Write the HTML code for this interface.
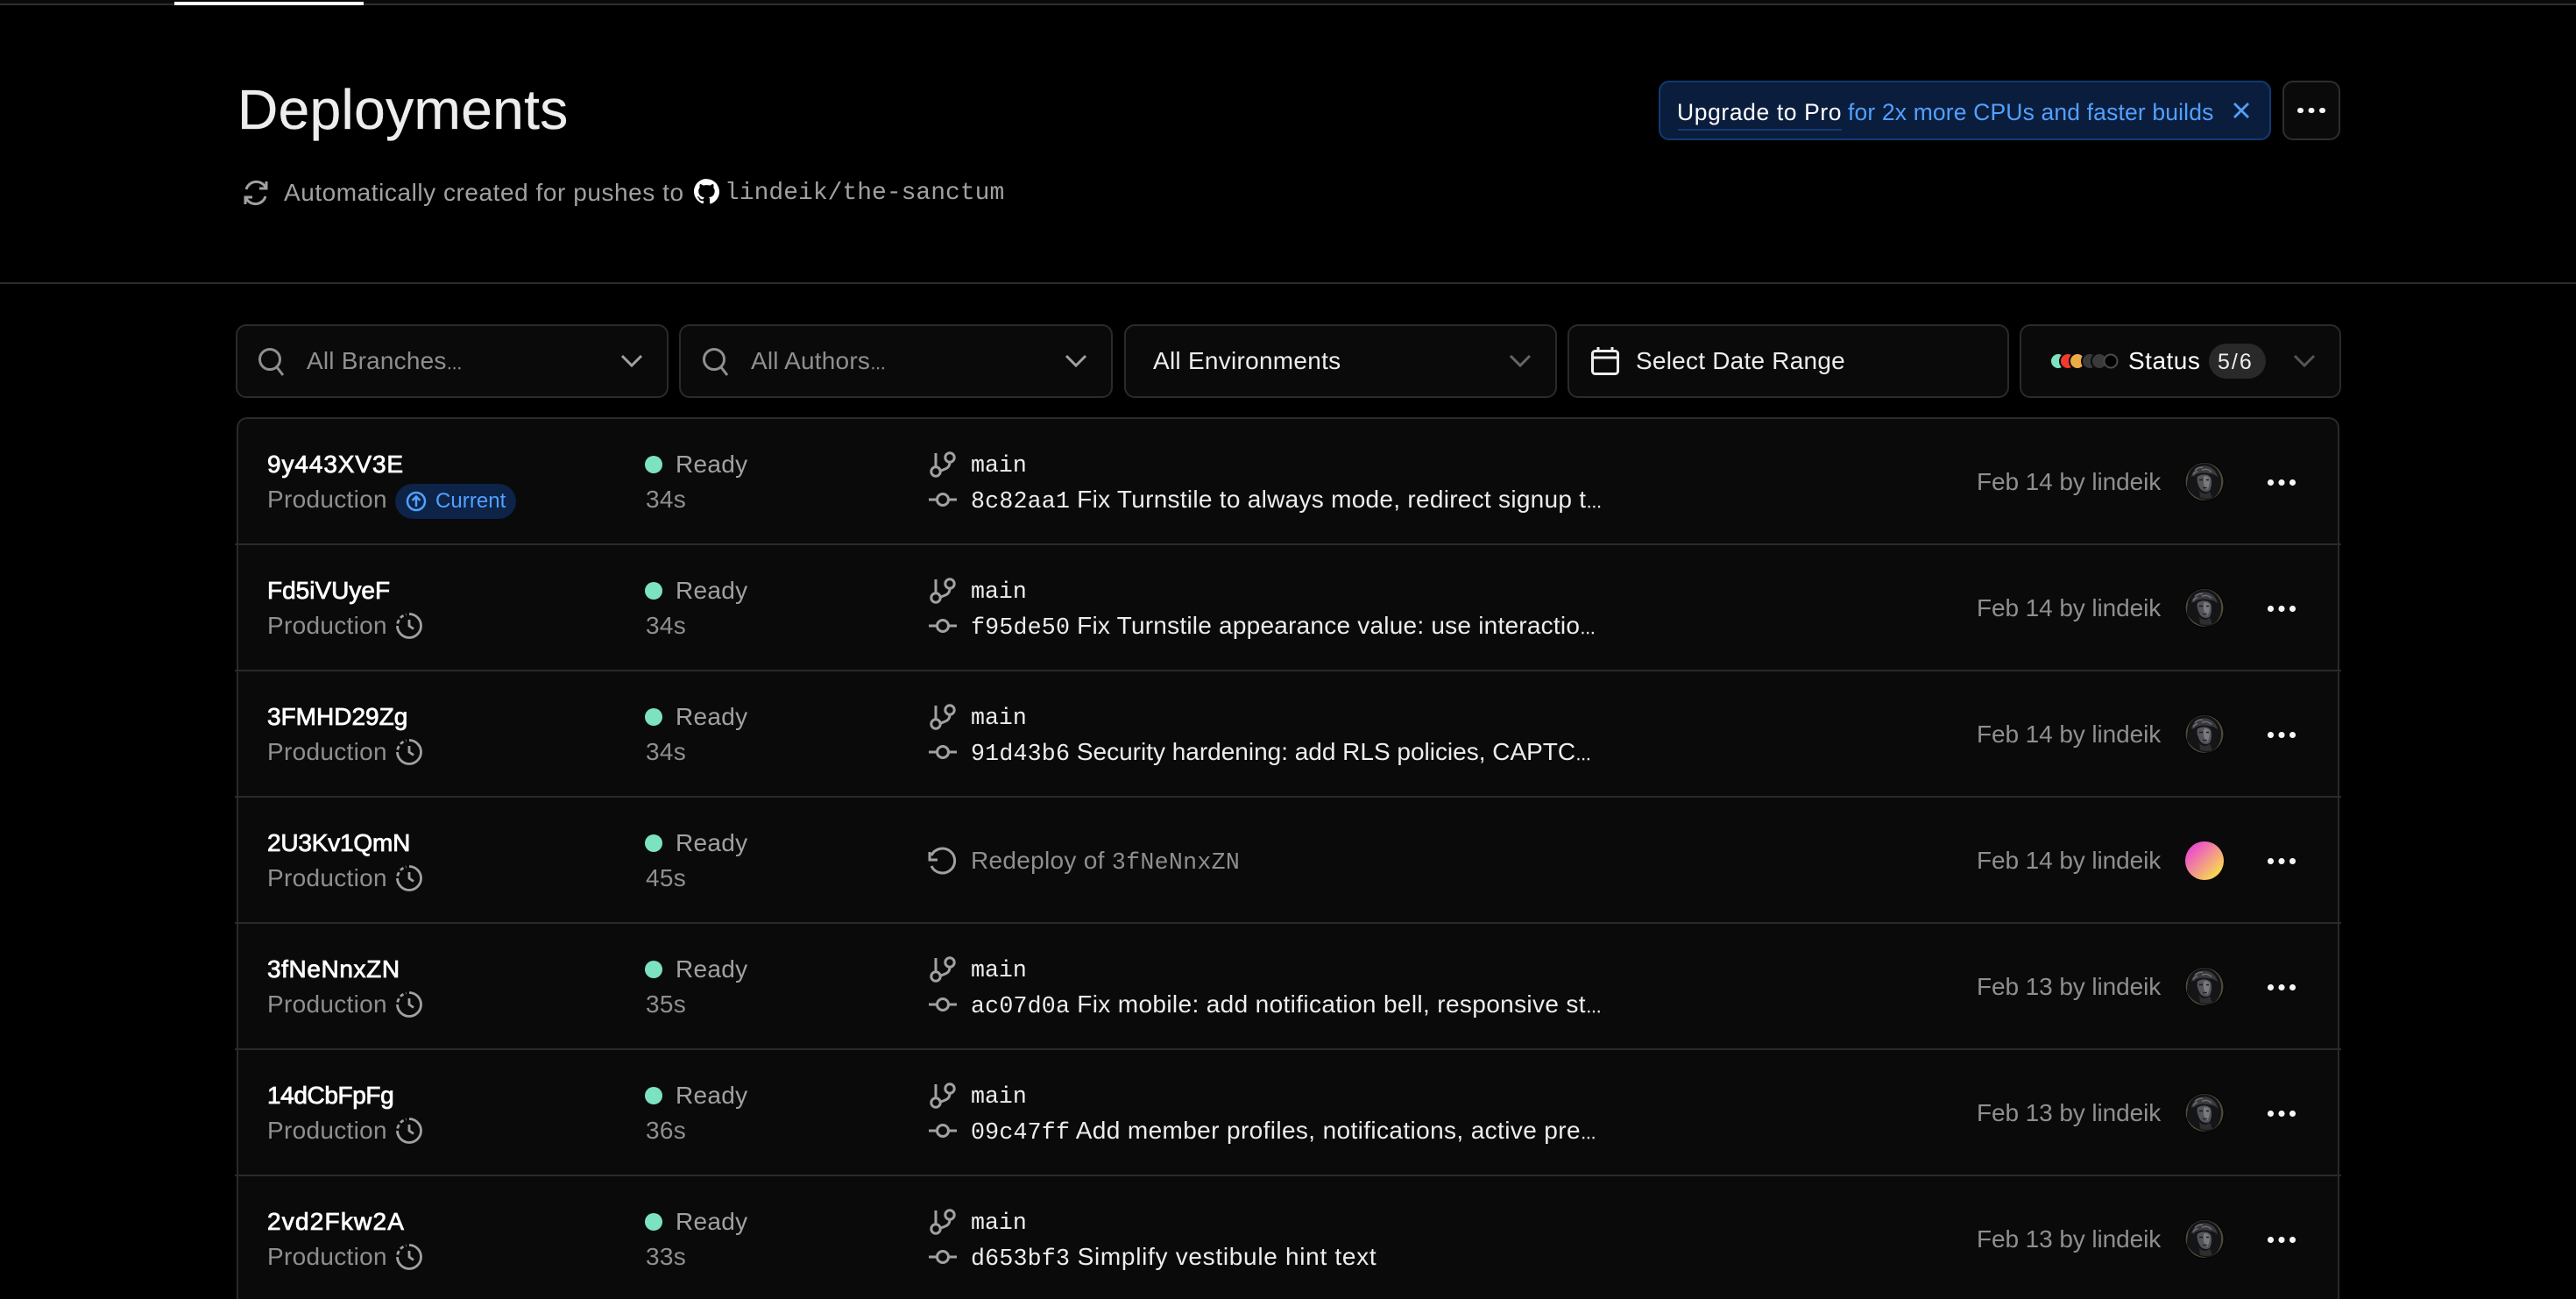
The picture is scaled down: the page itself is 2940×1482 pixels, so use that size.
<!DOCTYPE html>
<html><head><meta charset="utf-8"><title>Deployments</title>
<style>
*{box-sizing:border-box;margin:0;padding:0}
html,body{width:2940px;height:1482px;background:#000;overflow:hidden}
body{position:relative;font-family:"Liberation Sans",sans-serif;color:#ededed}
.a{position:absolute;white-space:nowrap}
.t{position:absolute;white-space:nowrap;font-size:28px;line-height:40px;letter-spacing:.3px}
.m{font-family:"Liberation Mono",monospace;font-size:26.6px}
.e{font-size:18px;letter-spacing:0;-webkit-text-stroke:.4px currentColor}
.box{position:absolute;background:#0a0a0a;border:2px solid #2a2a2a;border-radius:12px;top:370px;height:84px}
svg{position:absolute;overflow:visible;left:0;top:0;fill:none}
.list{position:absolute;left:270px;top:476px;width:2400px;height:1006px;background:#0a0a0a;border:2px solid #2a2a2a;border-bottom:0;border-radius:12px 12px 0 0}
.r{position:absolute;left:268px;width:2404px;height:146px;border-bottom:2px solid #2a2a2a}
.r.last{height:142px;border-bottom:0}
.r .t{color:#8f8f8f}
.r .id{left:37px;top:34px;color:#fff;-webkit-text-stroke:.8px #fff}
.r .env{left:37px;top:74px}
.r .ready{left:503px;top:34px;color:#a1a1a1}
.r .dur{left:469px;top:74px}
.r .dot{position:absolute;left:468px;top:44px;width:20px;height:20px;border-radius:50%;background:#7de2c1}
.r .br{left:840px;top:35px;color:#ededed;letter-spacing:0}
.r .cm{left:840px;top:74px;color:#ededed}
.r .cm .m{letter-spacing:.2px}
.r .date{left:1988px;top:54px;letter-spacing:-.09px}
.r .re{left:840px;top:54px;color:#8f8f8f}
.d3{position:absolute;left:2320px;top:71px;width:6.6px;height:6.6px;border-radius:50%;background:#f5f5f5;box-shadow:12.5px 0 #f5f5f5,25px 0 #f5f5f5}
</style></head>
<body>
<svg width="0" height="0" style="position:absolute"><defs>
<g id="clock"><path d="M0-13.500a13.500 13.500 0 1 1-13.500 13.500" stroke="#a1a1a1" stroke-width="2.800"/><path d="M-13.300-2.500a13.500 13.500 0 0 1 1.700-4.300M-10-9.300a13.500 13.500 0 0 1 3.500-2.500M-4-12.900l.6-.2" stroke="#a1a1a1" stroke-width="2.800"/><path d="M0-7V0l5 3.500" stroke="#a1a1a1" stroke-width="2.800"/></g>
<g id="branch" stroke="#a1a1a1" stroke-width="3"><path d="M-8-20V-4"/><circle cx="-8" cy="1" r="5.200"/><circle cx="8" cy="-15" r="5.200"/><path d="M8-10c0 8-6 8-11.500 10.500"/></g>
<g id="commit" stroke="#a1a1a1" stroke-width="3"><circle r="6.500"/><path d="M-16 0H-6.500M6.500 0H16"/></g>
<g id="ava"><circle r="22.500" fill="#000"/><circle r="21.500" fill="#4e4935"/>
<path d="M-20 7C-15 16-6 21 4 21C14 19 19 10 19 1C20-10 12-20 1-21C-11-21-19-13-19-4C-20 0-20 3-20 7Z" fill="#151517"/>
<path d="M-15-6C-13-14-6-19 2-18C9-17 14-11 15-5C12-8 9-9 6-9C0-11-8-10-11-7C-12-6-14-6-15-6Z" fill="#3a3a3e"/>
<path d="M-11-13c3-3 6-4 9-3M-3-13c4-2 8-1 11 2M-13-8c1-2 2-3 5-4" stroke="#6e6f73" stroke-width="1.500"/>
<path d="M-8-6C-3-9 4-9 7-5C9 0 8 6 6 10C2 13-4 11-6 6C-8 2-9-2-8-6Z" fill="#535458"/>
<path d="M-1-6C2-7 5-6 6-3C6 2 5 7 3 9C1 9 0 5-1 2Z" fill="#7a7b7f"/>
<path d="M-6-2h4M2-2h3" stroke="#1a1a1c" stroke-width="1.600"/><path d="M-2 7h5" stroke="#242426" stroke-width="1.400"/>
<path d="M6 11C2 15-3 14-6 10L-5 18C0 20 5 20 9 18Z" fill="#2e2e31"/></g>
<g id="search" stroke="#8f8f8f" stroke-width="3"><circle cx="-1" cy="-2" r="11.500"/><path d="M7 7L14 16"/></g>
</defs></svg>

<div class="a" style="left:0;top:0;width:2940px;height:4px;background:#0a0a0a"></div>
<div class="a" style="left:0;top:4px;width:2940px;height:2px;background:#2e2e2e"></div>
<div class="a" style="left:199px;top:2px;width:216px;height:4px;background:#fff"></div>

<div class="a" style="left:271px;top:88px;font-size:64px;line-height:74px;letter-spacing:.38px;color:#ededed;-webkit-text-stroke:.35px #ededed">Deployments</div>

<svg><g stroke="#a1a1a1" stroke-width="3"><path d="M281 216a12 12 0 0 1 21-4l2 3M303 224a12 12 0 0 1-21 4l-2-3"/><path d="M304 207v8h-8M280 233v-8h8"/></g></svg>
<div class="t" style="left:324px;top:200px;color:#a1a1a1;letter-spacing:.55px">Automatically created for pushes to</div>
<svg><path fill="#fff" d="M806.500 204c-8 0-14.500 6.500-14.500 14.500 0 6.400 4.200 11.800 9.900 13.700.7.100 1-.3 1-.7v-2.500c-4 .9-4.900-1.700-4.900-1.700-.7-1.700-1.600-2.100-1.600-2.100-1.300-.9.100-.9.100-.9 1.500.1 2.200 1.500 2.200 1.500 1.300 2.200 3.400 1.600 4.200 1.200.1-.9.500-1.600.9-1.900-3.200-.4-6.600-1.600-6.600-7.200 0-1.600.6-2.900 1.500-3.900-.1-.4-.6-1.900.2-3.900 0 0 1.200-.4 4 1.500 1.200-.3 2.400-.5 3.600-.5s2.400.2 3.600.5c2.800-1.900 4-1.500 4-1.500.8 2 .3 3.500.1 3.900.9 1 1.500 2.300 1.500 3.900 0 5.600-3.400 6.800-6.600 7.200.5.400 1 1.300 1 2.700v4c0 .4.300.8 1 .7 5.700-1.900 9.900-7.300 9.900-13.700 0-8-6.500-14.500-14.500-14.500z"/></svg>
<div class="t m" style="left:827px;top:201px;font-size:28px;color:#a1a1a1;letter-spacing:0">lindeik/the-sanctum</div>

<div class="a" style="left:1893px;top:92px;width:699px;height:68px;background:#0a1d3d;border:2px solid #123a72;border-radius:12px"></div>
<div class="t" style="left:1914px;top:108px;font-size:26.5px;color:#fff;letter-spacing:.6px">Upgrade to Pro</div>
<div class="a" style="left:1915px;top:147px;width:187px;height:2px;background:#153a70"></div>
<div class="t" style="left:2109px;top:108px;font-size:26.5px;color:#52a0ff;letter-spacing:.15px">for 2x more CPUs and faster builds</div>
<svg><path d="M2550 118l16 16M2566 118l-16 16" stroke="#52a0ff" stroke-width="2.800"/></svg>
<div class="a" style="left:2605px;top:92px;width:66px;height:68px;background:#0a0a0a;border:2px solid #2e2e2e;border-radius:12px"></div>
<div class="a" style="left:2622px;top:122.500px;width:6.600px;height:6.600px;border-radius:50%;background:#f5f5f5;box-shadow:12.500px 0 #f5f5f5,25px 0 #f5f5f5"></div>

<div class="a" style="left:0;top:322px;width:2940px;height:2px;background:#2a2a2a"></div>

<div class="box" style="left:269px;width:494px"></div>
<div class="box" style="left:775px;width:495px"></div>
<div class="box" style="left:1283px;width:494px"></div>
<div class="box" style="left:1789px;width:504px"></div>
<div class="box" style="left:2305px;width:367px"></div>

<svg><use href="#search" x="309" y="412"/><use href="#search" x="816" y="412"/>
<path d="M710 406l11 11 11-11" stroke="#a1a1a1" stroke-width="3"/>
<path d="M1217 406l11 11 11-11" stroke="#a1a1a1" stroke-width="3"/>
<path d="M1724 406l11 11 11-11" stroke="#666" stroke-width="3"/>
<path d="M2619 406l11 11 11-11" stroke="#555" stroke-width="3"/>
<g stroke="#ededed" stroke-width="3"><rect x="1817.500" y="400.500" width="29" height="26" rx="3"/><path d="M1817 408h30M1824 396v5M1840 396v5"/></g>
<g stroke="#0a0a0a" stroke-width="2"><circle cx="2349" cy="412" r="9" fill="#7de2c1"/><circle cx="2360" cy="412" r="9" fill="#f13a2b"/><circle cx="2371" cy="412" r="9" fill="#eeaa45"/><circle cx="2385" cy="412" r="9" fill="#3a3a3a"/><circle cx="2396" cy="412" r="9" fill="#3a3a3a"/></g>
<circle cx="2409" cy="412" r="7.500" fill="#000" stroke="#4a4a4a" stroke-width="2"/></svg>

<div class="t" style="left:350px;top:392px;color:#8f8f8f;letter-spacing:.2px">All Branches<span class="e">…</span></div>
<div class="t" style="left:857px;top:392px;color:#8f8f8f;letter-spacing:.2px">All Authors<span class="e">…</span></div>
<div class="t" style="left:1316px;top:392px;letter-spacing:.27px">All Environments</div>
<div class="t" style="left:1867px;top:392px;letter-spacing:.23px">Select Date Range</div>
<div class="t" style="left:2429px;top:392px;color:#fff;letter-spacing:.5px">Status</div>
<div class="a" style="left:2521px;top:392px;width:65px;height:40px;border-radius:20px;background:#292929"></div>
<div class="t" style="left:2531px;top:393px;font-size:25px;letter-spacing:2px">5/6</div>

<div class="list"></div>

<div class="r" style="top:476px"><div class="t id" style="letter-spacing:.9px">9y443XV3E</div><div class="t env">Production</div>
<div class="a" style="left:183px;top:76px;width:138px;height:40px;border-radius:20px;background:#0d2348"></div>
<svg><circle cx="207" cy="96" r="10" stroke="#52a0ff" stroke-width="2.500"/><path d="M207 102V91M202.500 95l4.500-4.500 4.500 4.500" stroke="#52a0ff" stroke-width="2.500"/></svg>
<div class="t" style="left:229px;top:76px;font-size:24px;color:#52a0ff;letter-spacing:.05px">Current</div>
<div class="dot"></div><div class="t ready">Ready</div><div class="t dur">34s</div>
<svg><use href="#branch" x="808" y="61"/><use href="#commit" x="808" y="94"/><use href="#ava" x="2248" y="73.500"/></svg>
<div class="t m br">main</div><div class="t cm" style="letter-spacing:.28px"><span class="m">8c82aa1</span> Fix Turnstile to always mode, redirect signup t<span class="e">…</span></div>
<div class="t date">Feb 14 by lindeik</div><div class="d3"></div></div>

<div class="r" style="top:620px"><div class="t id" style="letter-spacing:0">Fd5iVUyeF</div><div class="t env">Production</div>
<div class="dot"></div><div class="t ready">Ready</div><div class="t dur">34s</div>
<svg><use href="#clock" x="199" y="94"/><use href="#branch" x="808" y="61"/><use href="#commit" x="808" y="94"/><use href="#ava" x="2248" y="73.500"/></svg>
<div class="t m br">main</div><div class="t cm" style="letter-spacing:.23px"><span class="m">f95de50</span> Fix Turnstile appearance value: use interactio<span class="e">…</span></div>
<div class="t date">Feb 14 by lindeik</div><div class="d3"></div></div>

<div class="r" style="top:764px"><div class="t id" style="letter-spacing:0">3FMHD29Zg</div><div class="t env">Production</div>
<div class="dot"></div><div class="t ready">Ready</div><div class="t dur">34s</div>
<svg><use href="#clock" x="199" y="94"/><use href="#branch" x="808" y="61"/><use href="#commit" x="808" y="94"/><use href="#ava" x="2248" y="73.500"/></svg>
<div class="t m br">main</div><div class="t cm" style="letter-spacing:-.01px"><span class="m">91d43b6</span> Security hardening: add RLS policies, CAPTC<span class="e">…</span></div>
<div class="t date">Feb 14 by lindeik</div><div class="d3"></div></div>

<div class="r" style="top:908px"><div class="t id" style="letter-spacing:-.2px">2U3Kv1QmN</div><div class="t env">Production</div>
<div class="dot"></div><div class="t ready">Ready</div><div class="t dur">45s</div>
<svg><use href="#clock" x="199" y="94"/><g stroke="#a1a1a1" stroke-width="3" transform="translate(-2 0)"><path d="M797 68a14 14 0 1 1 0 12"/><path d="M795 64v9h9"/></g></svg>
<div class="t re">Redeploy of <span class="m">3fNeNnxZN</span></div>
<div class="t date">Feb 14 by lindeik</div>
<div class="a" style="left:2226px;top:52px;width:44px;height:44px;border-radius:50%;background:linear-gradient(135deg,#ea45d4 12%,#f9e04c 88%)"></div><div class="d3"></div></div>

<div class="r" style="top:1052px"><div class="t id" style="letter-spacing:.6px">3fNeNnxZN</div><div class="t env">Production</div>
<div class="dot"></div><div class="t ready">Ready</div><div class="t dur">35s</div>
<svg><use href="#clock" x="199" y="94"/><use href="#branch" x="808" y="61"/><use href="#commit" x="808" y="94"/><use href="#ava" x="2248" y="73.500"/></svg>
<div class="t m br">main</div><div class="t cm" style="letter-spacing:.36px"><span class="m">ac07d0a</span> Fix mobile: add notification bell, responsive st<span class="e">…</span></div>
<div class="t date">Feb 13 by lindeik</div><div class="d3"></div></div>

<div class="r" style="top:1196px"><div class="t id" style="letter-spacing:-.4px">14dCbFpFg</div><div class="t env">Production</div>
<div class="dot"></div><div class="t ready">Ready</div><div class="t dur">36s</div>
<svg><use href="#clock" x="199" y="94"/><use href="#branch" x="808" y="61"/><use href="#commit" x="808" y="94"/><use href="#ava" x="2248" y="73.500"/></svg>
<div class="t m br">main</div><div class="t cm" style="letter-spacing:.38px"><span class="m">09c47ff</span> Add member profiles, notifications, active pre<span class="e">…</span></div>
<div class="t date">Feb 13 by lindeik</div><div class="d3"></div></div>

<div class="r last" style="top:1340px"><div class="t id" style="letter-spacing:1.2px">2vd2Fkw2A</div><div class="t env">Production</div>
<div class="dot"></div><div class="t ready">Ready</div><div class="t dur">33s</div>
<svg><use href="#clock" x="199" y="94"/><use href="#branch" x="808" y="61"/><use href="#commit" x="808" y="94"/><use href="#ava" x="2248" y="73.500"/></svg>
<div class="t m br">main</div><div class="t cm" style="letter-spacing:.7px"><span class="m">d653bf3</span> Simplify vestibule hint text</div>
<div class="t date">Feb 13 by lindeik</div><div class="d3"></div></div>
</body></html>
